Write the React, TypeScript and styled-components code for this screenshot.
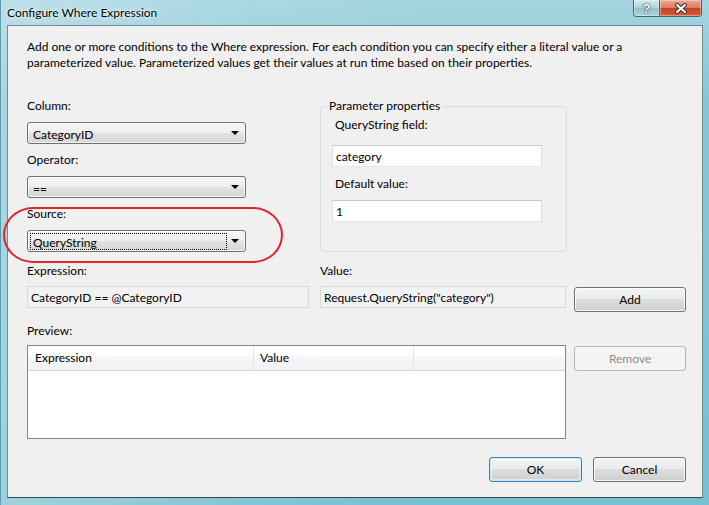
import * as React from "react";
import styled, { createGlobalStyle } from "styled-components";

const GlobalStyle = createGlobalStyle`
  html, body {
    margin: 0;
    padding: 0;
  }
  body {
    width: 709px;
    height: 505px;
    overflow: hidden;
    font-family: Lato, "Liberation Sans", sans-serif;
    font-size: 12px;
    color: #000;
  }
`;

const Window = styled.div`
  position: relative;
  width: 709px;
  height: 505px;
  box-sizing: border-box;
  display: flex;
  flex-direction: column;
  padding: 0 6px 7px 6px;
  border-left: 1px solid #5f9cad;
  background:
    linear-gradient(90deg, rgba(255, 255, 255, 0.28) 0%, rgba(255, 255, 255, 0.08) 35%, rgba(255, 255, 255, 0) 60%),
    linear-gradient(180deg, #a4d4e0 0%, #86c7d7 20%, #79c0d1 100%);
`;

const TitleBar = styled.div`
  height: 25px;
  display: flex;
  align-items: flex-start;
`;

const Title = styled.div`
  line-height: 25px;
  color: #000;
  text-shadow: 0 0 6px rgba(255, 255, 255, 0.9), 0 0 2px rgba(255, 255, 255, 0.9);
`;

const CaptionGroup = styled.div`
  margin-left: auto;
  margin-right: 1px;
  display: flex;
  height: 17px;
  border: 1px solid #46646e;
  border-top: none;
  border-radius: 0 0 4px 4px;
  overflow: hidden;
  box-sizing: border-box;
`;

const CaptionButton = styled.div<{ $kind: "help" | "close" }>`
  width: ${(p) => (p.$kind === "help" ? 25 : 41)}px;
  height: 100%;
  display: flex;
  align-items: center;
  justify-content: center;
  font-family: "Liberation Sans", sans-serif;
  font-weight: bold;
  font-size: 13px;
  color: #fff;
  text-shadow: 0 0 1px #2b3d44, 0 0 2px #2b3d44;
  box-shadow: inset 0 0 0 1px rgba(255, 255, 255, 0.35);
  background: ${(p) =>
    p.$kind === "help"
      ? "linear-gradient(180deg, #d3e8ee 0%, #b1d2db 50%, #93c1cd 50%, #a9d3de 100%)"
      : "linear-gradient(180deg, #eba797 0%, #dc7a60 50%, #c4421f 50%, #d4603b 100%)"};
  & + & {
    border-left: 1px solid #46646e;
  }
`;

const Client = styled.div`
  flex: 1;
  display: flex;
  flex-direction: column;
  padding: 13px 16px 0 19px;
  background: #f0f0f0;
  border: 1px solid #6f8c97;
  border-bottom-color: #2d4a55;
`;

const Description = styled.p`
  margin: 0;
  line-height: 16px;
`;

const Row = styled.div<{ $mt: number; $end?: boolean; $gap?: number }>`
  display: flex;
  margin-top: ${(p) => p.$mt}px;
  justify-content: ${(p) => (p.$end ? "flex-end" : "flex-start")};
  gap: ${(p) => p.$gap ?? 0}px;
`;

const Column = styled.div<{ $w?: number; $ml?: number }>`
  display: flex;
  flex-direction: column;
  width: ${(p) => (p.$w ? `${p.$w}px` : "auto")};
  margin-left: ${(p) => p.$ml ?? 0}px;
`;

const Label = styled.div<{ $mt?: number; $pl?: number }>`
  line-height: 16px;
  height: 16px;
  margin-top: ${(p) => p.$mt ?? 0}px;
  padding-left: ${(p) => p.$pl ?? 0}px;
`;

const Combo = styled.div`
  width: 219px;
  height: 22px;
  margin-top: 8px;
  box-sizing: border-box;
  display: flex;
  align-items: center;
  padding: 0 2px;
  border: 1px solid #707070;
  border-radius: 3px;
  background: linear-gradient(180deg, #f5f5f5 0%, #eeeeee 50%, #e2e2e2 50%, #d6d6d6 100%);
  box-shadow: inset 0 0 0 1px rgba(255, 255, 255, 0.75);
`;

const ComboText = styled.div<{ $focused?: boolean }>`
  flex: 1;
  height: 17px;
  line-height: 17px;
  box-sizing: border-box;
  padding-left: 2px;
  border: 1px dotted ${(p) => (p.$focused ? "#000" : "transparent")};
`;

const ComboArrow = styled.div`
  width: 16px;
  display: flex;
  justify-content: center;
  &::after {
    content: "";
    border-left: 4px solid transparent;
    border-right: 4px solid transparent;
    border-top: 4px solid #000;
  }
`;

const TextBox = styled.div<{ $w: number; $mt?: number; $readOnly?: boolean }>`
  width: ${(p) => p.$w}px;
  height: 22px;
  margin-top: ${(p) => p.$mt ?? 0}px;
  box-sizing: border-box;
  display: flex;
  align-items: center;
  padding-left: 3px;
  background: ${(p) => (p.$readOnly ? "#f2f2f2" : "#fff")};
  border: 1px solid;
  border-color: ${(p) => (p.$readOnly ? "#d9d9d9" : "#c6c9cd #dde1e6 #e3e7ec #dde1e6")};
`;

const GroupBox = styled.fieldset`
  margin: 0 0 0 11px;
  padding: 0;
  width: 247px;
  height: 154px;
  box-sizing: border-box;
  border: 1px solid #d5dfe5;
  border-radius: 3px;
  min-width: 0;
`;

const Legend = styled.legend`
  margin-left: 6px;
  padding: 0 2px;
  line-height: 16px;
`;

const ListView = styled.div`
  width: 540px;
  height: 94px;
  box-sizing: border-box;
  border: 1px solid #828790;
  background: #fff;
`;

const ListHeader = styled.div`
  display: flex;
  height: 24px;
  border-bottom: 1px solid #d5d5d5;
  background: linear-gradient(180deg, #ffffff 0%, #ffffff 40%, #f7f8fa 40%, #f1f2f4 100%);
`;

const HeaderCell = styled.div<{ $w?: number; $pl: number }>`
  width: ${(p) => (p.$w ? `${p.$w}px` : "auto")};
  flex: ${(p) => (p.$w ? "none" : "1")};
  box-sizing: border-box;
  padding-left: ${(p) => p.$pl}px;
  line-height: 23px;
  border-right: 1px solid ${(p) => (p.$w ? "#e3e5e7" : "transparent")};
`;

const Button = styled.button<{ $w: number; $variant?: "default" | "disabled"; $mt?: number; $ml?: number }>`
  width: ${(p) => p.$w}px;
  height: 25px;
  margin: ${(p) => p.$mt ?? 0}px 0 0 ${(p) => p.$ml ?? 0}px;
  padding: 0;
  font-family: inherit;
  font-size: 12px;
  color: ${(p) => (p.$variant === "disabled" ? "#8c8c8c" : "#000")};
  border-radius: 3px;
  border: 1px solid
    ${(p) => (p.$variant === "default" ? "#3c7fb1" : p.$variant === "disabled" ? "#b3b7ba" : "#707070")};
  background: ${(p) =>
    p.$variant === "disabled"
      ? "#f4f4f4"
      : "linear-gradient(180deg, #f3f3f3 0%, #ebebeb 50%, #dddddd 50%, #cfcfcf 100%)"};
  box-shadow: ${(p) =>
    p.$variant === "default"
      ? "inset 0 0 0 1px #c6e9fb, inset 0 0 0 2px rgba(255,255,255,0.5)"
      : p.$variant === "disabled"
      ? "none"
      : "inset 0 0 0 1px rgba(255,255,255,0.8)"};
`;

const Annotation = styled.div`
  position: absolute;
  left: 2px;
  top: 207px;
  width: 280px;
  height: 56px;
  box-sizing: border-box;
  border: 2px solid #e0242a;
  border-radius: 30px / 28px;
  pointer-events: none;
`;

function CloseGlyph() {
  return (
    <svg width="14" height="11" viewBox="0 0 14 11">
      <path d="M3 2 L11 9 M11 2 L3 9" stroke="#3a2a28" strokeWidth="4" strokeLinecap="round" />
      <path d="M3 2 L11 9 M11 2 L3 9" stroke="#fff" strokeWidth="2.2" strokeLinecap="round" />
    </svg>
  );
}

function DropDown({ value, focused }: { value: string; focused?: boolean }) {
  return (
    <Combo>
      <ComboText $focused={focused}>{value}</ComboText>
      <ComboArrow />
    </Combo>
  );
}

export default function App() {
  return (
    <>
      <GlobalStyle />
      <Window>
        <TitleBar>
          <Title>Configure Where Expression</Title>
          <CaptionGroup>
            <CaptionButton $kind="help">?</CaptionButton>
            <CaptionButton $kind="close">
              <CloseGlyph />
            </CaptionButton>
          </CaptionGroup>
        </TitleBar>
        <Client>
          <Description>
            Add one or more conditions to the Where expression. For each condition you can specify either a literal value or a
            <br />
            parameterized value. Parameterized values get their values at run time based on their properties.
          </Description>

          <Row $mt={27}>
            <Column $w={282}>
              <Label>Column:</Label>
              <DropDown value="CategoryID" />
              <Label $mt={8}>Operator:</Label>
              <DropDown value="==" />
              <Label $mt={8}>Source:</Label>
              <DropDown value="QueryString" focused />
            </Column>
            <GroupBox>
              <Legend>Parameter properties</Legend>
              <Column $ml={11}>
                <Label $mt={3} $pl={3}>QueryString field:</Label>
                <TextBox $w={210} $mt={12}>category</TextBox>
                <Label $mt={9} $pl={3}>Default value:</Label>
                <TextBox $w={210} $mt={8}>1</TextBox>
              </Column>
            </GroupBox>
          </Row>

          <Row $mt={11}>
            <Column $w={282}>
              <Label>Expression:</Label>
              <TextBox $w={282} $mt={7} $readOnly>CategoryID == @CategoryID</TextBox>
            </Column>
            <Column $w={247} $ml={11}>
              <Label>Value:</Label>
              <TextBox $w={246} $mt={7} $readOnly>Request.QueryString("category")</TextBox>
            </Column>
            <Column $ml={8}>
              <Button $w={112} $mt={24}>Add</Button>
            </Column>
          </Row>

          <Label $mt={11}>Preview:</Label>

          <Row $mt={6}>
            <ListView>
              <ListHeader>
                <HeaderCell $w={226} $pl={7}>Expression</HeaderCell>
                <HeaderCell $w={160} $pl={6}>Value</HeaderCell>
                <HeaderCell $pl={6} />
              </ListHeader>
            </ListView>
            <Button $w={112} $ml={8} $mt={1} $variant="disabled">Remove</Button>
          </Row>

          <Row $mt={18} $end $gap={11}>
            <Button $w={93} $variant="default">OK</Button>
            <Button $w={93}>Cancel</Button>
          </Row>
        </Client>
        <Annotation />
      </Window>
    </>
  );
}
